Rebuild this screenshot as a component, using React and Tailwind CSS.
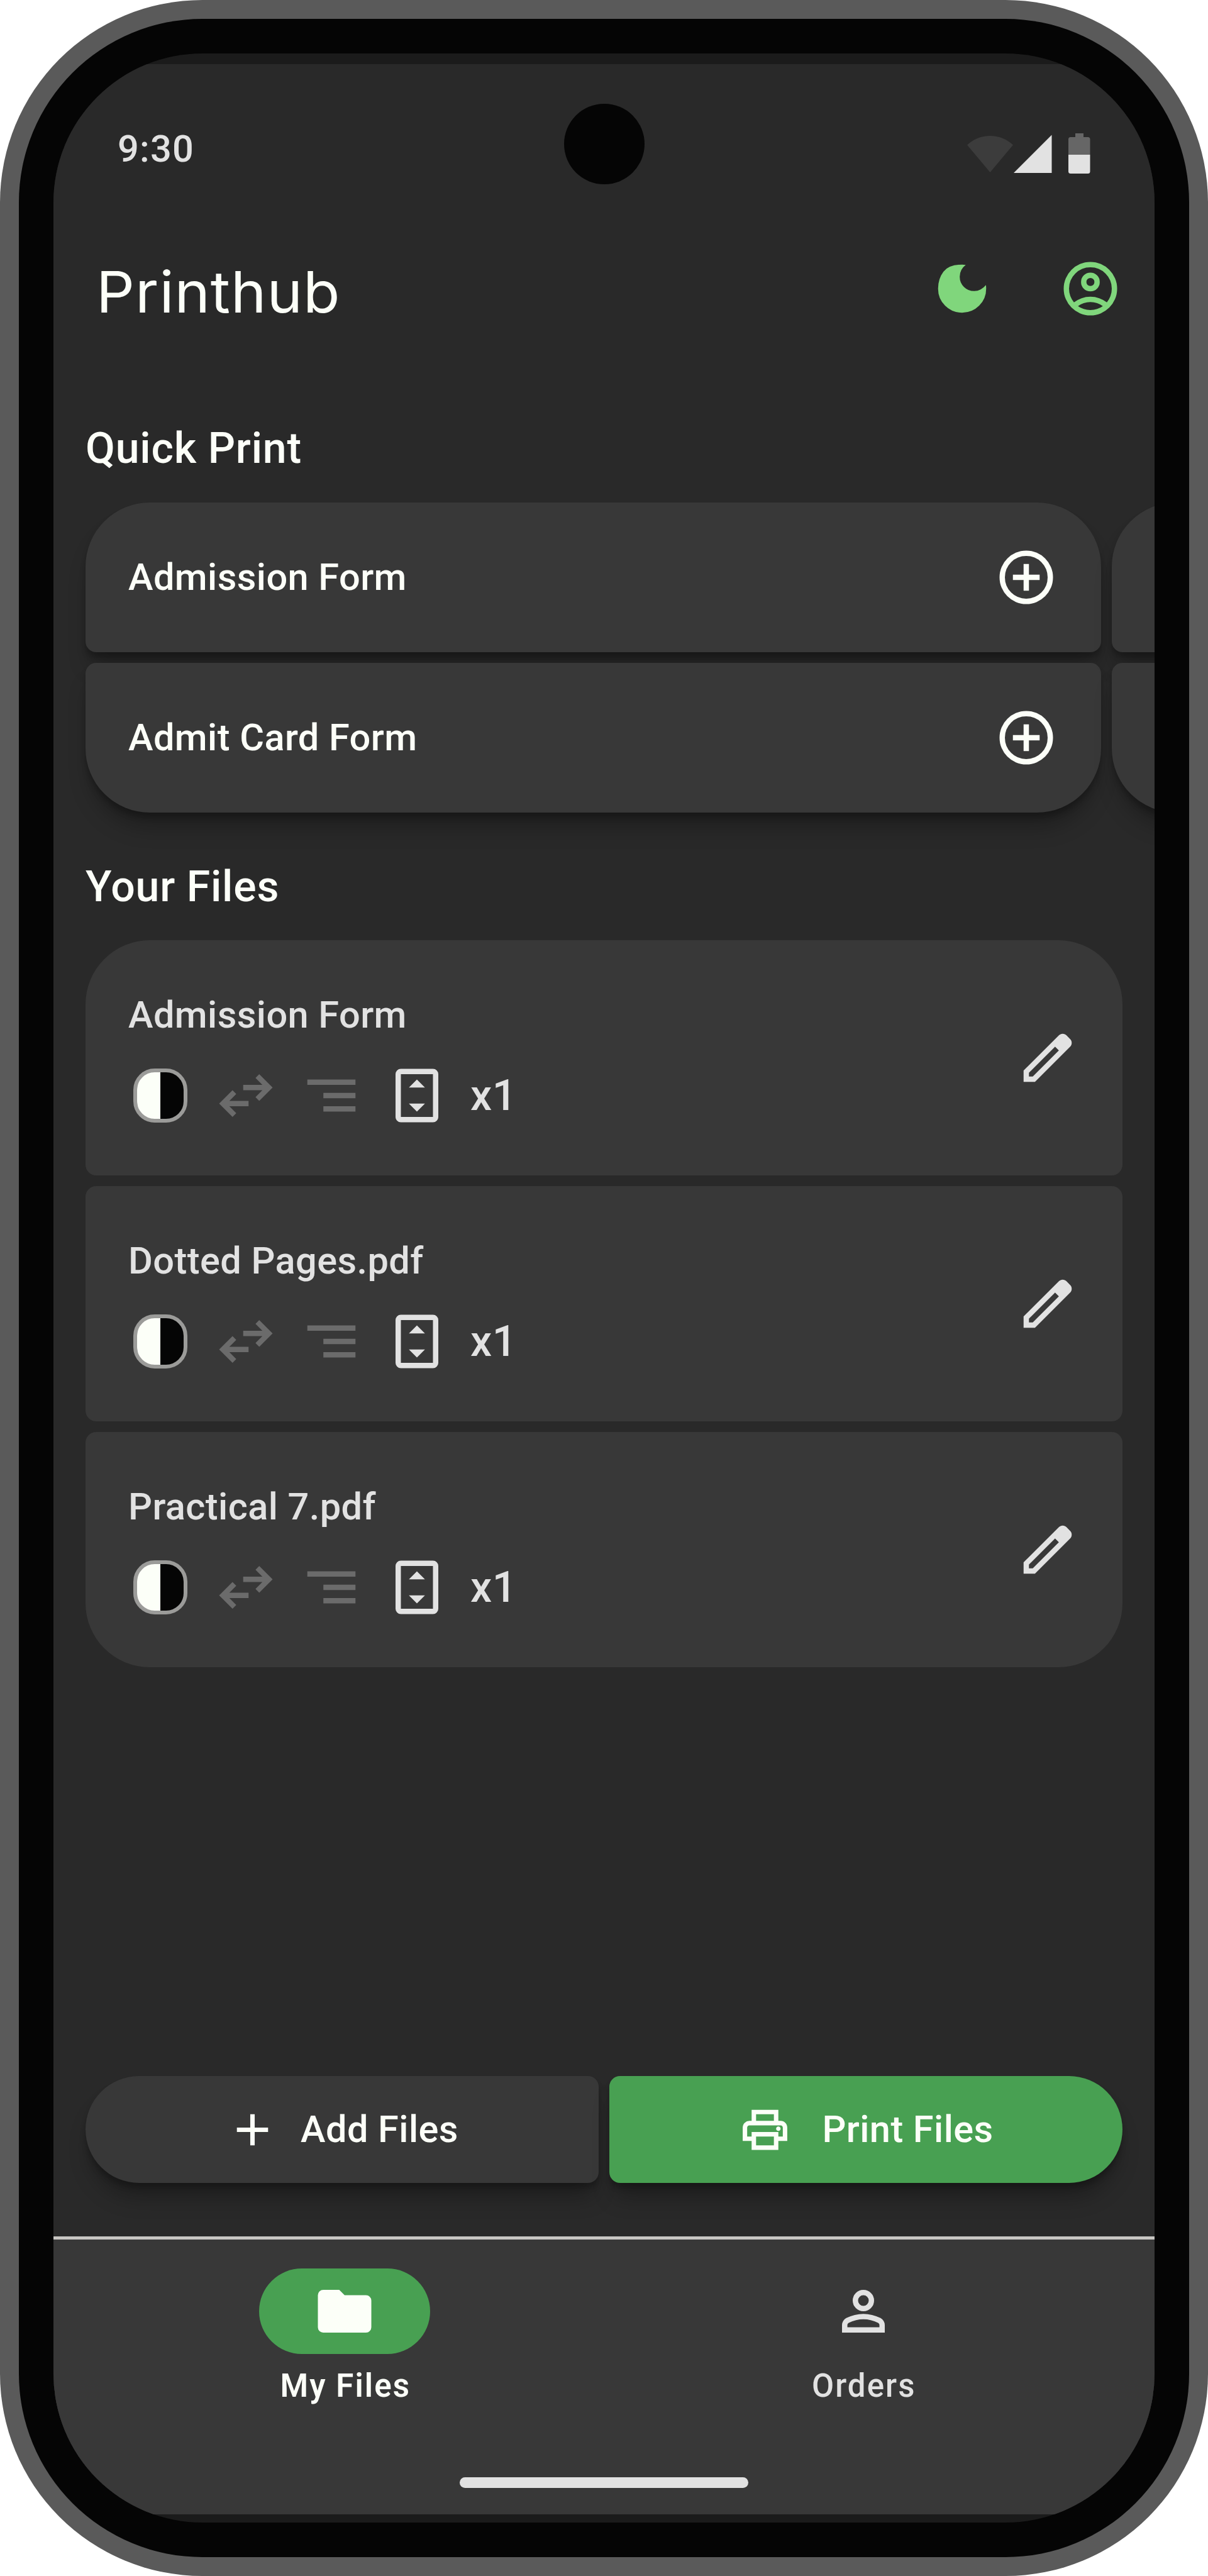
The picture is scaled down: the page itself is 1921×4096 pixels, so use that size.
import React, { useState } from 'react'

// Material Symbols outlines, drawn on the 960 unit grid
const ICONS = {
    moon: 'M480-840q-199 0-279.500 105.500T120-480q0 150 105 255t255 105q150 0 255-105t105-255q0-28-4-54-33 41-78.500 65.500T660-444q-90 0-153-63t-63-153q0-54 24.500-100T534-836q-26-4-54-4Z',
    account: 'M234-276q51-39 114-61.500T480-360q69 0 132 22.500T726-276q35-41 54.500-93T800-480q0-133-93.500-226.500T480-800q-133 0-226.500 93.500T160-480q0 59 19.500 111t54.500 93Zm246-164q-59 0-99.500-40.500T340-580q0-59 40.500-99.500T480-720q59 0 99.500 40.500T620-580q0 59-40.500 99.500T480-440Zm0 360q-83 0-156-31.500T197-197q-54-54-85.500-127T80-480q0-83 31.500-156T197-763q54-54 127-85.500T480-880q83 0 156 31.500T763-763q54 54 85.500 127T880-480q0 83-31.500 156T763-197q-54 54-127 85.500T480-80Zm0-80q53 0 100-15.500t86-44.500q-39-29-86-44.500T480-280q-53 0-100 15.500T294-220q39 29 86 44.500T480-160Zm0-360q26 0 43-17t17-43q0-26-17-43t-43-17q-26 0-43 17t-17 43q0 26 17 43t43 17Z',
    addCircle: 'M440-280h80v-160h160v-80H520v-160h-80v160H280v80h160v160Zm40 200q-83 0-156-31.500T197-197q-54-54-85.500-127T80-480q0-83 31.500-156T197-763q54-54 127-85.500T480-880q83 0 156 31.500T763-763q54 54 85.500 127T880-480q0 83-31.500 156T763-197q-54 54-127 85.500T480-80Zm0-80q134 0 227-93t93-227q0-134-93-227t-227-93q-134 0-227 93t-93 227q0 134 93 227t227 93Z',
    swap: 'M280-160 80-360l200-200 56 57-103 103h287v80H233l103 103-56 57Zm400-240-56-57 103-103H440v-80h287L624-743l56-57 200 200-200 200Z',
    segment: 'M360-240v-80h480v80H360Zm0-200v-80h480v80H360ZM120-640v-80h720v80H120Z',
    fitPage: 'M480-720l120 120H360ZM480-240 360-360h240ZM240-80q-33 0-56.500-23.500T160-160v-640q0-33 23.500-56.500T240-880h480q33 0 56.500 23.500T800-800v640q0 33-23.500 56.500T720-80H240Zm0-80h480v-640H240v640Z',
    edit: 'M200-200h57l391-391-57-57-391 391v57Zm-80 80v-170l528-527q12-11 26.500-17t30.500-6q16 0 31 6t26 18l55 56q12 11 17.500 26t5.500 30q0 16-5.500 30.500T817-647L290-120H120Z',
    add: 'M440-440H200v-80h240v-240h80v240h240v80H520v240h-80v-240Z',
    print: 'M640-640v-120H320v120h-80v-200h480v200h-80Zm80 180q17 0 28.500-11.500T760-500q0-17-11.500-28.500T720-540q-17 0-28.500 11.500T680-500q0 17 11.500 28.500T720-460Zm-80 260v-160H320v160h320Zm80 80H240v-160H80v-240q0-51 35-85.500t85-34.500h560q51 0 85.500 34.500T880-520v240H720v160Zm80-240v-160q0-17-11.500-28.500T760-560H200q-17 0-28.500 11.500T160-520v160h80v-80h480v80h80Z',
    folder: 'M160-160q-33 0-56.500-23.500T80-240v-480q0-33 23.500-56.500T160-800h240l80 80h320q33 0 56.500 23.500T880-640v400q0 33-23.500 56.500T800-160H160Z',
    person: 'M480-480q-66 0-113-47t-47-113q0-66 47-113t113-47q66 0 113 47t47 113q0 66-47 113t-113 47ZM160-160v-112q0-34 17.500-62.500T224-378q62-31 126-46.500T480-440q66 0 130 15.500T736-378q29 15 46.500 43.500T800-272v112H160Zm80-80h480v-32q0-11-5.500-20T700-306q-54-27-109-40.500T480-360q-56 0-111 13.500T260-306q-9 5-14.500 14t-5.500 20v32Zm240-320q33 0 56.500-23.500T560-640q0-33-23.500-56.500T480-720q-33 0-56.500 23.500T400-640q0 33 23.500 56.500T480-560Z'
}

const FORMS = ['Admission Form', 'Admit Card Form']
const FILES = ['Admission Form', 'Dotted Pages.pdf', 'Practical 7.pdf']

const Icon = ({ name, className = 'size-[102px]' }) => (
    <svg viewBox="0 -960 960 960" fill="currentColor" className={`shrink-0 ${className}`}>
        <path d={ICONS[name]} />
    </svg>
)

const ContrastIcon = () => (
    <svg viewBox="0 0 102 102" className="size-[102px] shrink-0">
        <path d="M51 11H42a28 28 0 0 0-28 28v24a28 28 0 0 0 28 28h9Z" fill="#fcfff8" />
        <path d="M51 11h9a28 28 0 0 1 28 28v24a28 28 0 0 1-28 28h-9Z" fill="#050505" />
        <rect x="11" y="11" width="80" height="80" rx="31" fill="none" stroke="#9b9b99" strokeWidth="6" />
    </svg>
)

const StatusBar = () => (
    <div className="relative flex h-[221px] shrink-0 items-center justify-between px-[102px]">
        <span className="pt-[49px] text-[59.5px] leading-[85px] font-medium tracking-[1.2px] text-[#e2e2e2]">9:30</span>
        <div className="absolute left-1/2 top-[63px] size-[128px] -translate-x-1/2 rounded-full bg-[#050505]" />
        <svg viewBox="0 0 196 65" className="mt-[63px] h-[65px] w-[196px]">
            <path d="M0 18.500A53 53 0 0 1 73 18.500L36.500 62Z" fill="#3c3c3c" />
            <path d="M74 63 134.500 2.500V63Z" fill="#e2e2e2" />
            <path d="M172 0h13v6h7q3.500 0 3.500 3.500V34h-34.500V9.500q0-3.500 3.500-3.500h7.500Z" fill="#666" />
            <path d="M161 34h34.500v26.500q0 3.500-3.500 3.500h-27.500q-3.500 0-3.500-3.500Z" fill="#e2e2e2" />
        </svg>
    </div>
)

const TopBar = () => (
    <header className="flex h-[272px] shrink-0 items-center justify-between pl-[68px] pr-[51px]">
        <h1 className="origin-left scale-x-105 pt-[10px] font-['Inter'] text-[91px] leading-[119px] tracking-[0.9px] text-[#fcfff8]">Printhub</h1>
        <div className="flex gap-[102px] text-[#80d67c]">
            <button><Icon name="moon" /></button>
            <button><Icon name="account" /></button>
        </div>
    </header>
)

const SectionTitle = ({ children }) => (
    <h2 className="text-[68px] leading-[102px] font-medium tracking-[0.8px] text-[#fcfff8]">{children}</h2>
)

const FormColumn = ({ forms }) => (
    <div className="flex w-[1615px] shrink-0 flex-col gap-[17px]">
        {forms.map((form, i) => (
            <div
                key={i}
                className="flex h-[238px] items-center justify-between rounded-[17px] bg-[#383838] px-[68px] text-[#fcfff8] shadow-[0_8px_8px_rgba(0,0,0,0.22),0_30px_34px_-8px_rgba(0,0,0,0.27)] first:rounded-t-[102px] last:rounded-b-[102px]"
            >
                <span className="text-[59.5px] leading-[85px] font-medium tracking-[0.43px]">{form}</span>
                {form && <Icon name="addCircle" />}
            </div>
        ))}
    </div>
)

const FileCard = ({ name }) => (
    <div className="flex h-[374px] items-center justify-between rounded-[17px] bg-[#383838] px-[68px] text-[#e2e2e2] first:rounded-t-[102px] last:rounded-b-[102px]">
        <div className="flex flex-col gap-[34px]">
            <span className="text-[59.5px] leading-[85px] font-medium tracking-[0.43px]">{name}</span>
            <div className="flex items-center gap-[34px]">
                <ContrastIcon />
                <Icon name="swap" className="size-[102px] text-[#6b6b6b]" />
                <Icon name="segment" className="size-[102px] text-[#6b6b6b]" />
                <Icon name="fitPage" />
                <span className="text-[68px] leading-[102px] font-medium tracking-[0.64px]">x1</span>
            </div>
        </div>
        <button><Icon name="edit" /></button>
    </div>
)

const NavItem = ({ icon, label, active, onClick }) => (
    <button onClick={onClick} className="flex flex-1 flex-col items-center gap-[17px]">
        <span className={`flex h-[136px] w-[272px] items-center justify-center rounded-full ${active ? 'bg-[#48a052] text-[#fcfff8]' : 'text-[#e2e2e2]'}`}>
            <Icon name={icon} />
        </span>
        <span className={`pl-[2px] text-[51px] leading-[68px] tracking-[2.1px] ${active ? 'font-semibold text-[#fcfff8]' : 'font-medium text-[#e2e2e2]'}`}>
            {label}
        </span>
    </button>
)

export default function App() {
    const [tab, setTab] = useState('files')

    return (
        <div className="h-[4096px] w-[1921px] bg-white font-['Roboto',sans-serif]">
            <div className="h-full rounded-[322px] bg-[#5a5a5a] p-[30px]">
                <div className="h-full rounded-[292px] bg-[#050505] p-[55px]">
                    <div className="flex h-full flex-col overflow-hidden rounded-[237px] bg-[#1b1b1b] pt-[17px] pb-[13px]">
                        <div className="flex min-h-0 flex-1 flex-col bg-[#292929]">
                            <StatusBar />
                            <TopBar />

                            <main className="flex flex-1 flex-col px-[51px]">
                                <div className="mt-[67px]">
                                    <SectionTitle>Quick Print</SectionTitle>
                                </div>
                                <div className="mt-[35px] flex gap-[17px]">
                                    <FormColumn forms={FORMS} />
                                    <FormColumn forms={['', '']} />
                                </div>
                                <div className="mt-[67px]">
                                    <SectionTitle>Your Files</SectionTitle>
                                </div>
                                <div className="mt-[34px] flex flex-col gap-[17px]">
                                    {FILES.map(name => <FileCard key={name} name={name} />)}
                                </div>

                                <div className="mt-auto mb-[85px] flex h-[170px] gap-[17px] text-[59.5px] leading-[86px] font-medium tracking-[0.43px] text-[#fcfff8]">
                                    <button className="flex flex-1 items-center justify-center gap-[34px] rounded-l-[85px] rounded-r-[17px] bg-[#383838] shadow-[0_8px_8px_rgba(0,0,0,0.22),0_30px_34px_-8px_rgba(0,0,0,0.27)]">
                                        <Icon name="add" className="size-[85px]" />
                                        Add Files
                                    </button>
                                    <button className="flex flex-1 items-center justify-center gap-[48px] rounded-l-[17px] rounded-r-[85px] bg-[#48a052] shadow-[0_8px_8px_rgba(0,0,0,0.22),0_30px_34px_-8px_rgba(0,0,0,0.27)]">
                                        <Icon name="print" className="size-[85px]" />
                                        Print Files
                                    </button>
                                </div>
                            </main>

                            <nav className="flex h-[442px] shrink-0 flex-col border-t-[5px] border-[#c8c6c3] bg-[#383838]">
                                <div className="flex h-[335px] gap-[34px] px-[68px] pt-[46px]">
                                    <NavItem icon="folder" label="My Files" active={tab === 'files'} onClick={() => setTab('files')} />
                                    <NavItem icon="person" label="Orders" active={tab === 'orders'} onClick={() => setTab('orders')} />
                                </div>
                                <div className="flex flex-1 items-center justify-center">
                                    <div className="h-[17px] w-[459px] rounded-full bg-[#e2e2e2]" />
                                </div>
                            </nav>
                        </div>
                    </div>
                </div>
            </div>
        </div>
    )
}
